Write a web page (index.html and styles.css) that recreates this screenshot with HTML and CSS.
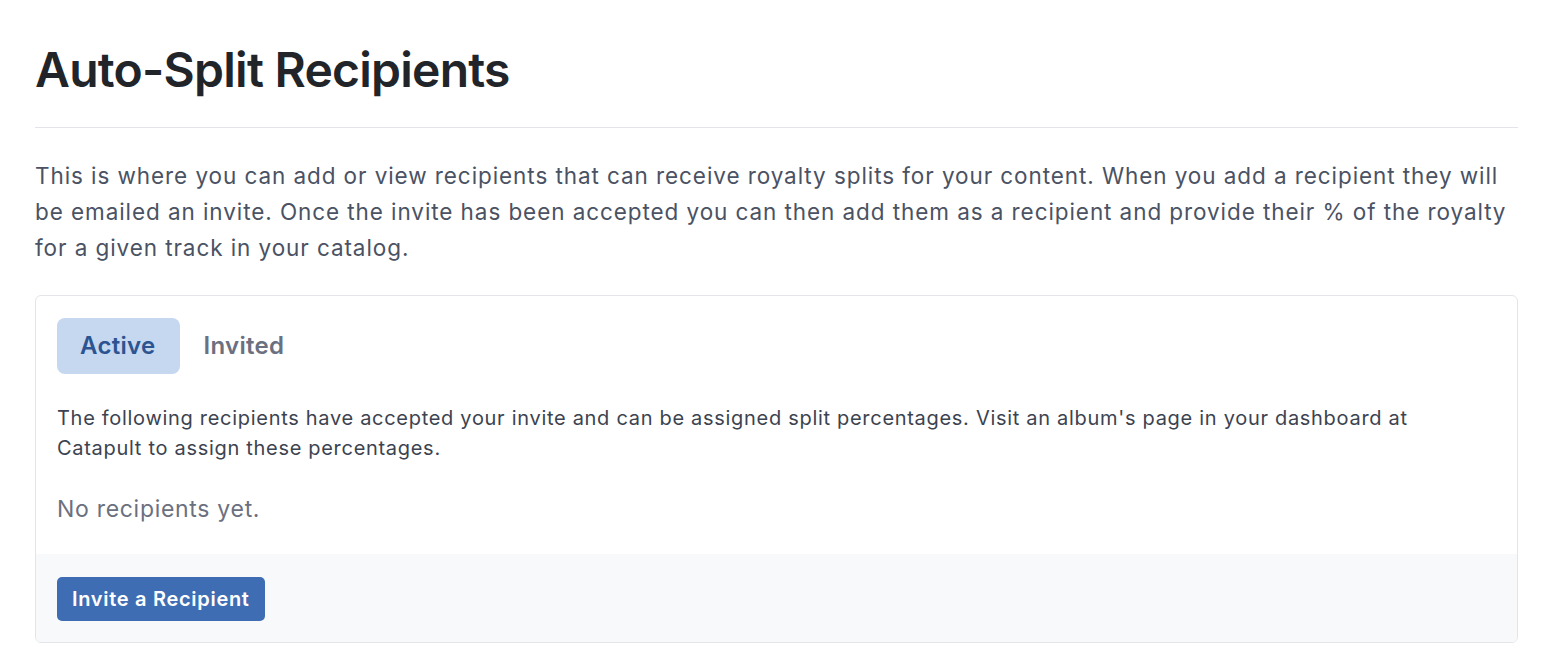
FILE: index.html
```html
<!DOCTYPE html>
<html>
<head>
<meta charset="utf-8" />
<title>Auto-Split Recipients</title>
<link rel="stylesheet" href="styles.css">
</head>
<body>
	<div class="page">
		<h1 class="title">Auto-Split Recipients</h1>
		<p class="intro">This is where you can add or view recipients that can receive royalty splits for your content. When you add a recipient they will be emailed an invite. Once the invite has been accepted you can then add them as a recipient and provide their % of the royalty for a given track in your catalog.</p>
		<div class="card">
			<div class="card-body">
				<div class="tabs">
					<span class="tab active">Active</span>
					<span class="tab">Invited</span>
				</div>
				<p class="note">The following recipients have accepted your invite and can be assigned split percentages. Visit an album's page in your dashboard at Catapult to assign these percentages.</p>
				<p class="empty">No recipients yet.</p>
			</div>
			<div class="card-footer">
				<button class="btn">Invite a Recipient</button>
			</div>
		</div>
	</div>
</body>
</html>
```

FILE: styles.css
```css
* {
	margin: 0;
	padding: 0;
	box-sizing: border-box;
}
html,body {
	background: #fff;
}
body {
	font-family: Inter, "Noto Sans", sans-serif;
	color: #212529;
}
.page {
	width: 1483px;
	margin-left: 35px;
	padding-top: 38px;
}
.title {
	font-size: 48px;
	font-weight: 600;
	line-height: 64px;
	letter-spacing: -0.75px;
	color: #212529;
	padding-bottom: 25px;
	border-bottom: 1px solid #e2e4e8;
}
.intro {
	margin-top: 30px;
	font-size: 22.5px;
	line-height: 36px;
	letter-spacing: 0.92px;
	color: #4a5263;
}
.card {
	margin-top: 29px;
	border: 1px solid #e3e5e8;
	border-radius: 6px;
	overflow: hidden;
}
.card-body {
	padding: 22px 21px 28px;
}
.tabs {
	display: flex;
}
.tab {
	display: inline-block;
	font-size: 24px;
	font-weight: 600;
	line-height: 56px;
	letter-spacing: 0.3px;
	padding: 0 25px 0 23px;
	border-radius: 8px;
	color: #6b7080;
}
.tab.active {
	background: #c6d7f0;
	color: #2b5490;
}
.note {
	margin-top: 29px;
	font-size: 20px;
	line-height: 30px;
	letter-spacing: 0.7px;
	color: #3c4350;
}
.empty {
	margin-top: 29px;
	font-size: 23px;
	line-height: 34px;
	letter-spacing: 0.7px;
	color: #6b7080;
}
.card-footer {
	background: #f8f9fb;
	padding: 23px 21px 21px;
}
.btn {
	font-family: inherit;
	font-size: 20px;
	font-weight: 600;
	letter-spacing: 0.7px;
	color: #fff;
	background: #3f6db3;
	border: none;
	border-radius: 5px;
	height: 44px;
	padding: 0 15px;
}
```
